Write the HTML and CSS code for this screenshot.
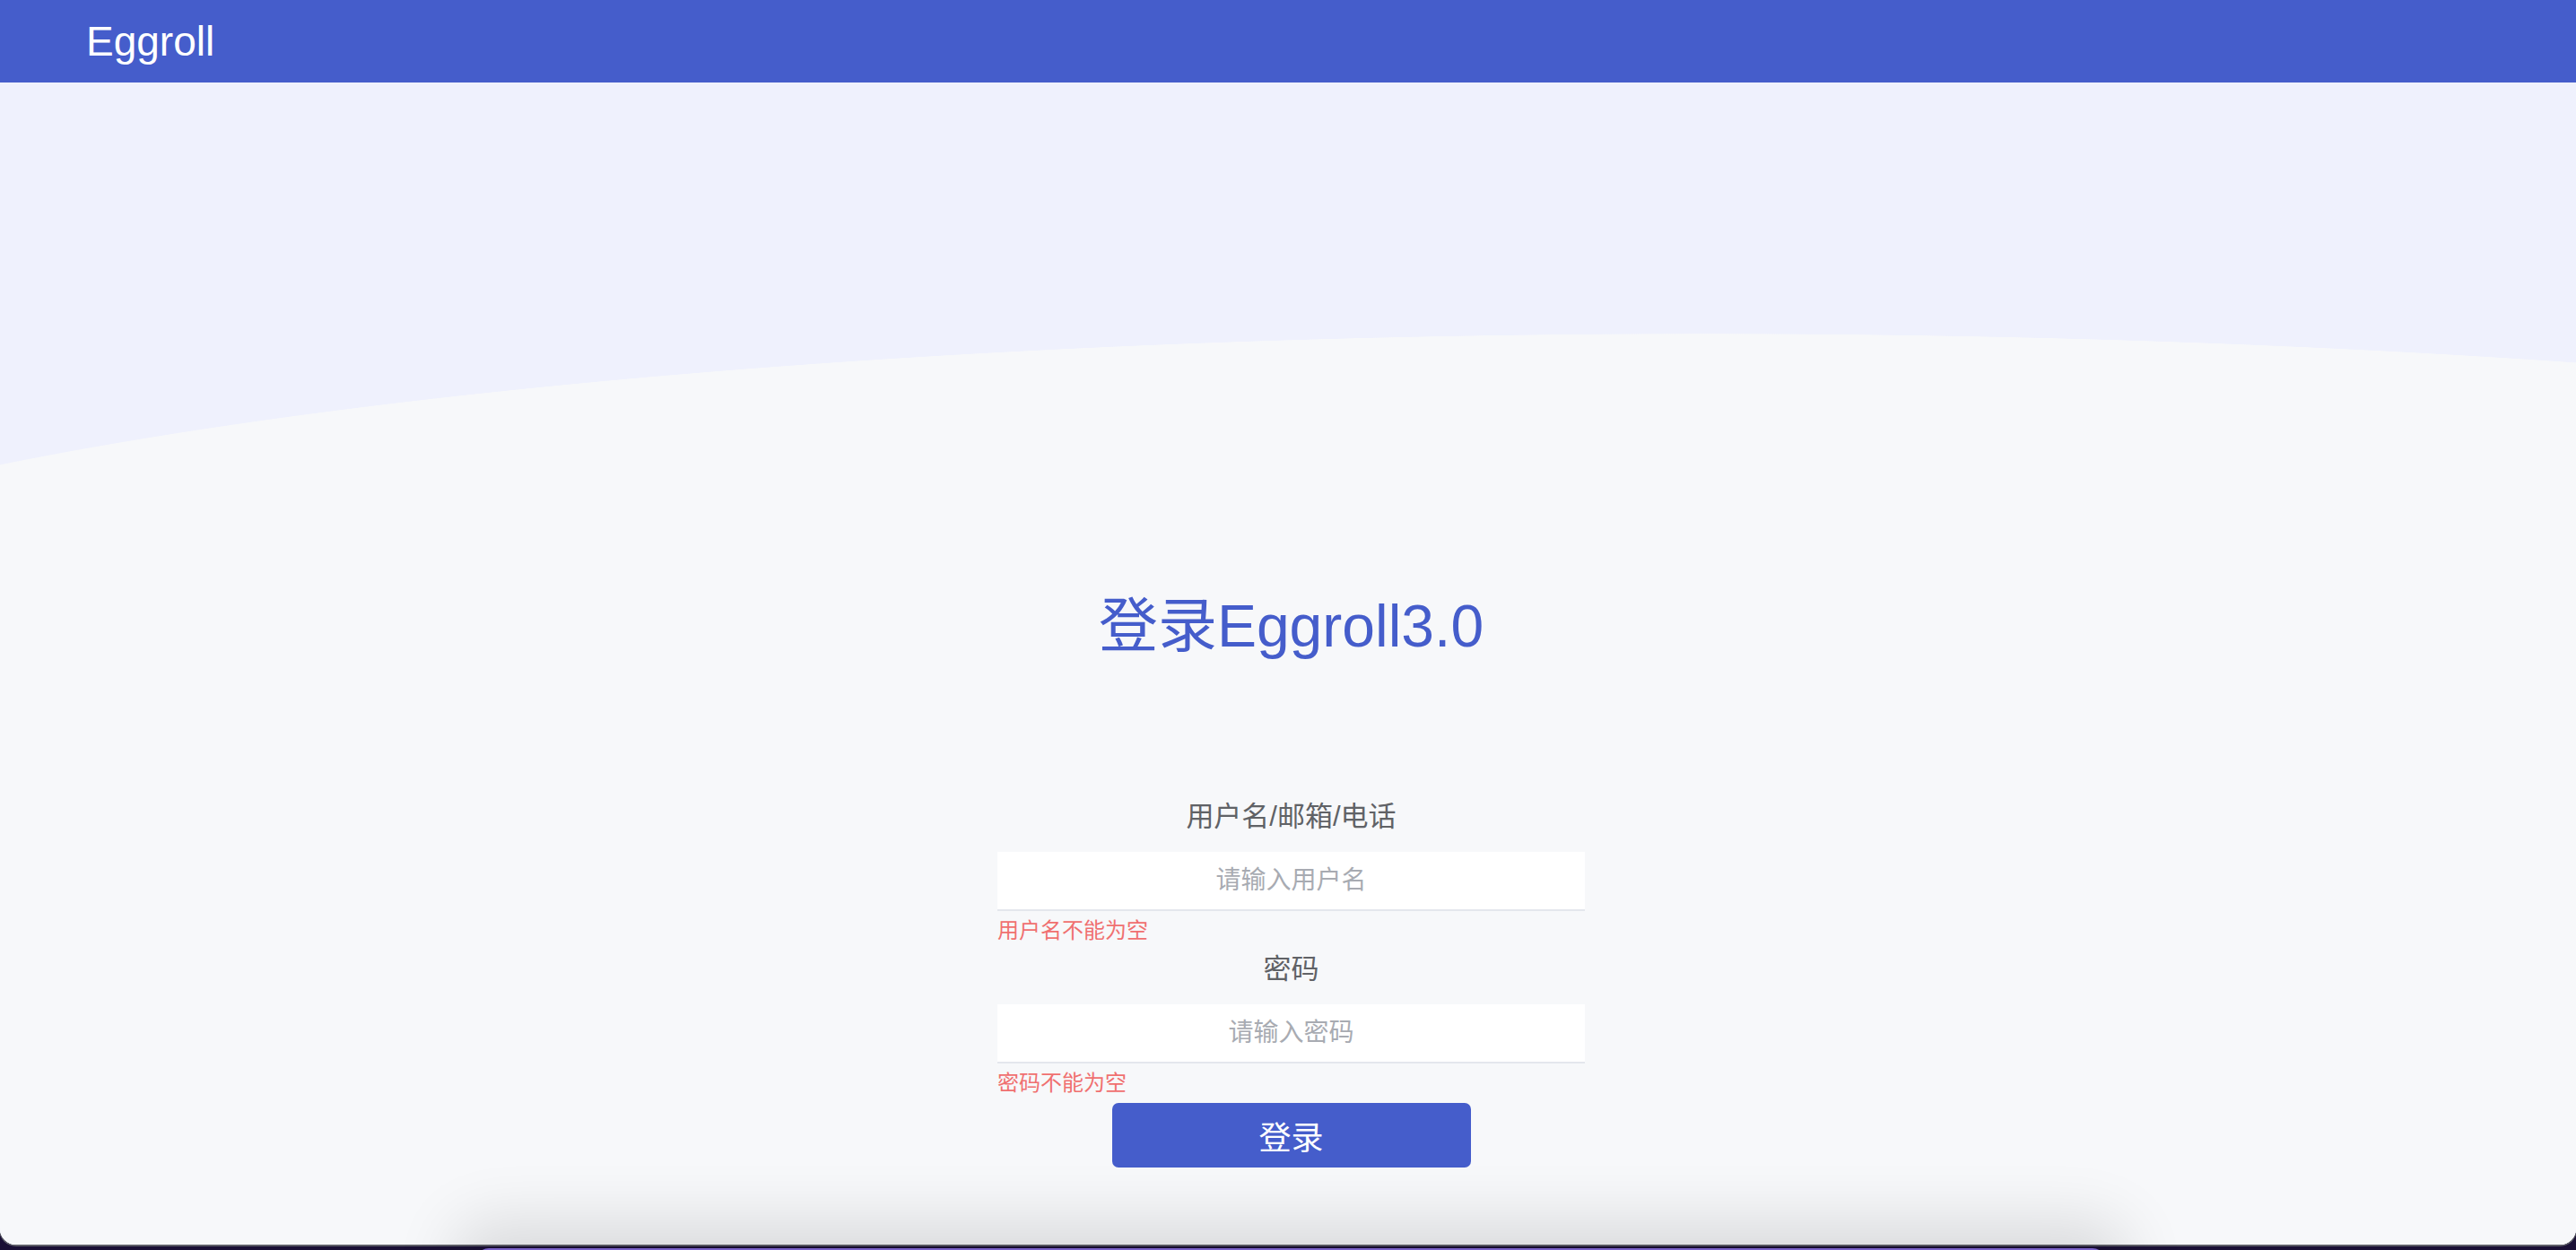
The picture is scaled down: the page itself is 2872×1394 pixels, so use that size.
FILE: index.html
```html
<!DOCTYPE html>
<html lang="zh-CN">
<head>
<meta charset="utf-8">
<title>Eggroll</title>
<link rel="stylesheet" href="styles.css">
</head>
<body>
<div class="window">
  <header class="topbar">
    <span class="brand">Eggroll</span>
  </header>
  <main class="stage">
    <section class="login">
      <h1 class="login-title">登录Eggroll3.0</h1>
      <form class="login-form">
        <label class="field-label" for="user">用户名/邮箱/电话</label>
        <input class="field-input" id="user" type="text" placeholder="请输入用户名">
        <div class="field-error">用户名不能为空</div>
        <label class="field-label field-label-next" for="pwd">密码</label>
        <input class="field-input" id="pwd" type="password" placeholder="请输入密码">
        <div class="field-error">密码不能为空</div>
        <button class="submit" type="button">登录</button>
      </form>
    </section>
  </main>
</div>
<div class="dock"></div>
</body>
</html>
```

FILE: styles.css
```css
html, body {
  margin: 0;
  padding: 0;
}

body {
  width: 2872px;
  height: 1394px;
  overflow: hidden;
  background: #1a1035;
  font-family: "Liberation Sans", "Noto Sans CJK SC", sans-serif;
  position: relative;
}

.window {
  height: 1388px;
  display: flex;
  flex-direction: column;
  border-radius: 0 0 18px 18px;
  overflow: hidden;
  background: #f7f8fa;
  box-shadow: 0 1px 0 1px #5c5c66;
}

.topbar {
  height: 92px;
  flex: none;
  background: #455dcb;
  display: flex;
  align-items: center;
  padding-left: 96px;
}

.brand {
  color: #ffffff;
  font-size: 46px;
  line-height: 1;
}

.stage {
  flex: 1;
  background:
    linear-gradient(to bottom, transparent 655px, #f7f8fa 655px),
    radial-gradient(ellipse 2400px 375px at 1900px 655px, #f7f8fa 99.85%, #eff1fd 100%),
    #eff1fd;
}

.login {
  width: 655px;
  margin-left: calc(50% - 324px);
  padding-top: 561px;
}

.login-title {
  margin: 0;
  font-size: 66px;
  line-height: 90px;
  font-weight: 400;
  color: #455dcb;
  text-align: center;
  white-space: nowrap;
}

.login-form {
  margin-top: 144px;
  display: flex;
  flex-direction: column;
}

.field-label {
  display: block;
  font-size: 31px;
  line-height: 48px;
  color: #606266;
  text-align: center;
  margin-bottom: 15px;
}

.field-label-next {
  margin-top: 1px;
}

.field-input {
  display: block;
  box-sizing: content-box;
  width: 655px;
  height: 64px;
  padding: 0;
  margin: 0;
  border: none;
  border-bottom: 2px solid #e4e7ed;
  background: #ffffff;
  font-family: "Liberation Sans", "Noto Sans CJK SC", sans-serif;
  font-size: 28px;
  text-align: center;
  color: #303133;
  outline: none;
}

.field-input::placeholder {
  color: #a8abb2;
}

.field-error {
  margin-top: 4px;
  font-size: 24px;
  line-height: 36px;
  color: #f07070;
}

.submit {
  align-self: center;
  margin-top: 4px;
  width: 400px;
  height: 72px;
  border: none;
  border-radius: 7px;
  background: #455dcb;
  color: #ffffff;
  font-family: "Liberation Sans", "Noto Sans CJK SC", sans-serif;
  font-size: 36px;
  padding: 0;
}

.dock {
  position: absolute;
  left: 531px;
  top: 1392px;
  width: 1816px;
  height: 60px;
  border-radius: 14px;
  background: #7a62c8;
  box-shadow: 0 -6px 70px 24px rgba(0, 0, 0, 0.12);
}
```
